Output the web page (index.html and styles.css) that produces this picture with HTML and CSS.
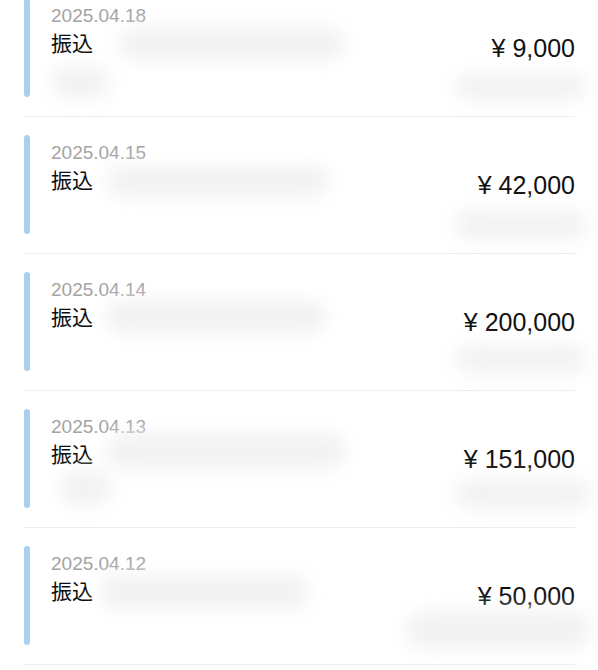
FILE: index.html
```html
<!DOCTYPE html>
<html lang="ja">
<head>
<meta charset="utf-8">
<title>入出金明細</title>
<link rel="stylesheet" href="styles.css">
</head>
<body>
<div class="list">
  <div class="row">
    <div class="bar"></div>
    <div class="info">
      <div class="date">2025.04.18</div>
      <div class="title">振込</div>
    </div>
    <div class="amount">¥ 9,000</div>
    <span class="smudge r1a"></span>
    <span class="smudge r1b"></span>
    <span class="smudge r1c"></span>
  </div>
  <div class="row">
    <div class="bar"></div>
    <div class="info">
      <div class="date">2025.04.15</div>
      <div class="title">振込</div>
    </div>
    <div class="amount">¥ 42,000</div>
    <span class="smudge r2a"></span>
    <span class="smudge r2c"></span>
  </div>
  <div class="row">
    <div class="bar"></div>
    <div class="info">
      <div class="date">2025.04.14</div>
      <div class="title">振込</div>
    </div>
    <div class="amount">¥ 200,000</div>
    <span class="smudge r3a"></span>
    <span class="smudge r3c"></span>
  </div>
  <div class="row">
    <div class="bar"></div>
    <div class="info">
      <div class="date">2025.04.13</div>
      <div class="title">振込</div>
    </div>
    <div class="amount">¥ 151,000</div>
    <span class="smudge r4a"></span>
    <span class="smudge r4b"></span>
    <span class="smudge r4c"></span>
  </div>
  <div class="row">
    <div class="bar"></div>
    <div class="info">
      <div class="date">2025.04.12</div>
      <div class="title">振込</div>
    </div>
    <div class="amount">¥ 50,000</div>
    <span class="smudge r5a"></span>
    <span class="smudge r5c"></span>
  </div>
</div>
</body>
</html>
```
FILE: styles.css
```css
html, body {
  margin: 0;
  padding: 0;
  background: #ffffff;
  overflow: hidden;
}
body {
  font-family: "Liberation Sans", Arial, "Noto Sans CJK JP", sans-serif;
  color: #111;
}
.list {
  margin-top: -20px;
}
.row {
  position: relative;
  display: flex;
  align-items: stretch;
  margin: 0 23px 0 24px;
  padding: 18px 0 19px;
  border-bottom: 1px solid #eeeeee;
}
.bar {
  flex: none;
  width: 6px;
  height: 99px;
  border-radius: 3px;
  background: #aad0f1;
  margin-right: 21px;
}
.info {
  padding-top: 7px;
}
.date {
  font-size: 19px;
  line-height: 22px;
  color: #a4a4a4;
}
.title {
  margin-top: 3px;
  font-family: "Noto Sans CJK JP", sans-serif;
  font-size: 21px;
  line-height: 25px;
  color: #0d0d0d;
}
.amount {
  margin-left: auto;
  align-self: center;
  font-size: 25px;
  line-height: 30px;
  color: #111;
  position: relative;
  z-index: 1;
}
.smudge {
  position: absolute;
  background: #f2f2f2;
  border-radius: 20px;
  filter: blur(9px);
  z-index: 2;
}
.r1a { left: 94px; top: 47px; width: 227px; height: 33px; }
.r1b { left: 28px; top: 86px; width: 58px; height: 33px; }
.r1c { left: 431px; top: 94px; width: 132px; height: 26px; }
.r2a { left: 82px; top: 48px; width: 224px; height: 32px; }
.r2c { left: 431px; top: 93px; width: 132px; height: 29px; }
.r3a { left: 82px; top: 46px; width: 220px; height: 34px; }
.r3c { left: 431px; top: 91px; width: 132px; height: 28px; }
.r4a { left: 82px; top: 42px; width: 240px; height: 36px; }
.r4b { left: 36px; top: 80px; width: 52px; height: 34px; }
.r4c { left: 431px; top: 88px; width: 136px; height: 30px; }
.r5a { left: 76px; top: 47px; width: 210px; height: 34px; }
.r5c { left: 382px; top: 83px; width: 184px; height: 38px; }
```
